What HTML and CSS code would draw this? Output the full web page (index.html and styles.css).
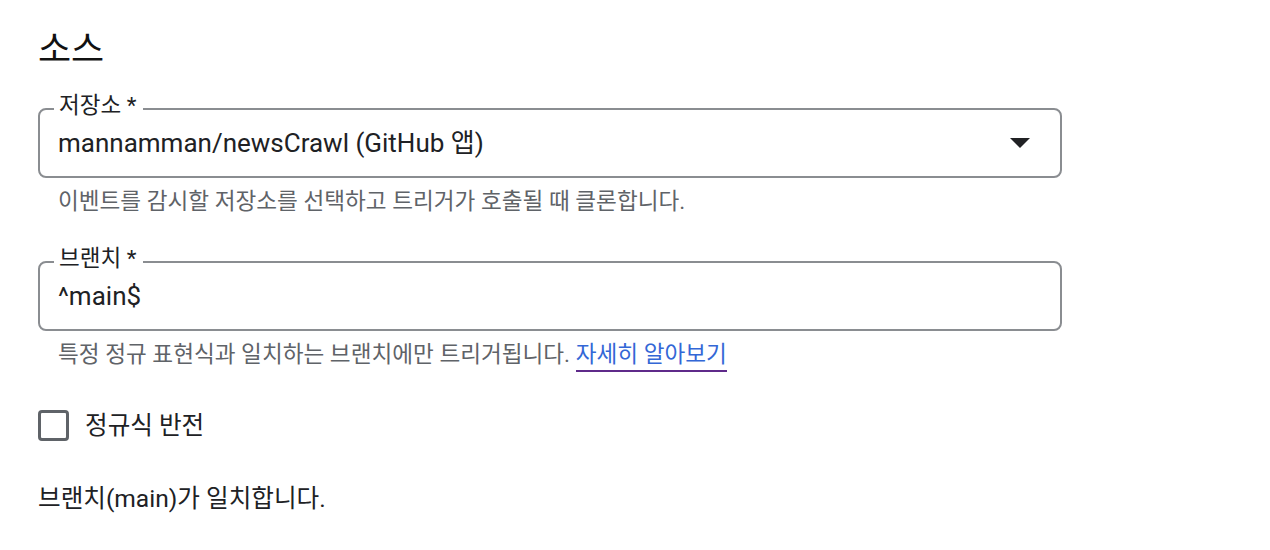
FILE: index.html
```html
<!DOCTYPE html>
<html lang="ko">
<head>
<meta charset="utf-8">
<link rel="stylesheet" href="styles.css">
</head>
<body>
<main class="page">
  <h2 class="title">소스</h2>

  <div class="field">
    <div class="box">
      <span class="float-label">저장소 *</span>
      <span class="value">mannamman/newsCrawl (GitHub 앱)</span>
      <svg class="arrow" width="20" height="10" viewBox="0 0 20 10"><path d="M0 0h20L10 10z" fill="#202124"/></svg>
    </div>
    <div class="helper">이벤트를 감시할 저장소를 선택하고 트리거가 호출될 때 클론합니다.</div>
  </div>

  <div class="field">
    <div class="box">
      <span class="float-label">브랜치 *</span>
      <span class="value">^main$</span>
    </div>
    <div class="helper">특정 정규 표현식과 일치하는 브랜치에만 트리거됩니다. <a class="link" href="#">자세히 알아보기</a></div>
  </div>

  <label class="check">
    <span class="checkbox"></span>
    <span class="check-label">정규식 반전</span>
  </label>

  <p class="match">브랜치(main)가 일치합니다.</p>
</main>
</body>
</html>
```

FILE: styles.css
```css
html, body {
  margin: 0;
  padding: 0;
  background: #ffffff;
}

body {
  font-family: Roboto, "Noto Sans CJK KR", sans-serif;
  color: #202124;
}

.page {
  width: 1024px;
  padding: 30px 0 0 38px;
  display: flex;
  flex-direction: column;
}

.title {
  margin: 0;
  font-size: 36px;
  font-weight: 400;
  line-height: 40px;
  height: 40px;
  color: #111111;
}

.field {
  display: flex;
  flex-direction: column;
  margin-top: 38px;
}

.field + .field {
  margin-top: 45px;
}

.box {
  position: relative;
  height: 70px;
  box-sizing: border-box;
  border: 2px solid #8a8d91;
  border-radius: 8px;
  display: flex;
  align-items: center;
  padding: 0 30px 0 18px;
}

.float-label {
  position: absolute;
  left: 14px;
  top: -17px;
  padding: 0 7px 0 5px;
  background: #ffffff;
  font-size: 22.5px;
  line-height: 24px;
  color: #202124;
}

.value {
  flex: 1;
  font-size: 26px;
  line-height: 30px;
}

.arrow {
  display: block;
}

.helper {
  margin-top: 10px;
  padding-left: 20px;
  font-size: 22.6px;
  line-height: 28px;
  color: #5f6368;
}

.link {
  color: #3367d6;
  text-decoration: none;
  border-bottom: 2px solid #5f2a8a;
  padding-bottom: 2px;
}

.check {
  display: flex;
  align-items: center;
  gap: 16px;
  margin-top: 41px;
}

.checkbox {
  width: 31px;
  height: 31px;
  box-sizing: border-box;
  border: 3px solid #5f6368;
  border-radius: 4px;
}

.check-label {
  font-size: 24.6px;
  line-height: 30px;
}

.match {
  margin: 43px 0 0;
  font-size: 24.6px;
  line-height: 30px;
}
```
